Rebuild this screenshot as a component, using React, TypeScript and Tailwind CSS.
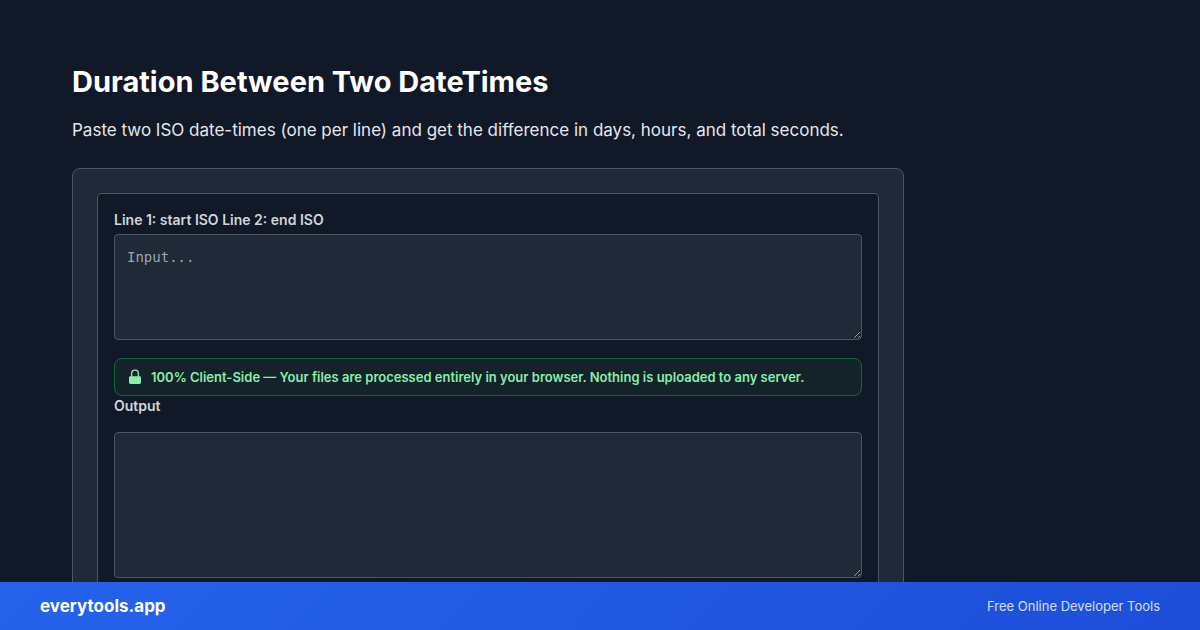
import React from "react";

function LockIcon() {
  return (
    <svg
      viewBox="0 0 16 16"
      className="w-4 h-4 shrink-0"
      fill="currentColor"
      aria-hidden="true"
    >
      <rect x="2" y="7.2" width="12" height="7.8" rx="1.4" />
      <path
        d="M4.6 8V4.6a3.4 3.4 0 0 1 6.8 0V8"
        fill="none"
        stroke="currentColor"
        strokeWidth="1.3"
      />
    </svg>
  );
}

function Tool() {
  return (
    <div className="rounded border border-[#4b5563] bg-[#111827] p-4">
      <label
        htmlFor="input"
        className="block text-sm font-semibold text-[#d1d5db] mb-1"
      >
        Line 1: start ISO Line 2: end ISO
      </label>
      <textarea
        id="input"
        rows={4}
        placeholder="Input..."
        className="block w-full rounded border border-[#4b5563] bg-[#1f2937] p-3 font-['DejaVu_Sans_Mono',monospace] text-sm text-white placeholder:text-[#9ca3af]"
      />
      <div className="mt-[18px] flex items-center gap-2 rounded-lg border border-[#166534] bg-[#14232a] px-3 py-2 text-[13px] leading-5 font-semibold text-[#86efac]">
        <LockIcon />
        <span>
          100% Client-Side — Your files are processed entirely in your browser.
          Nothing is uploaded to any server.
        </span>
      </div>
      <label
        htmlFor="output"
        className="block text-sm font-semibold text-[#d1d5db] mb-4"
      >
        Output
      </label>
      <textarea
        id="output"
        rows={6}
        readOnly
        className="block w-full rounded border border-[#4b5563] bg-[#1f2937] p-3 font-['DejaVu_Sans_Mono',monospace] text-sm text-white"
      />
    </div>
  );
}

function Footer() {
  return (
    <footer className="flex h-12 shrink-0 items-center justify-between bg-linear-135 from-[#2563eb] to-[#1d4ed8] px-10">
      <a href="#" className="text-[17px] leading-7 font-bold text-white">
        everytools.app
      </a>
      <span className="text-[13px] leading-5 text-white/80">
        Free Online Developer Tools
      </span>
    </footer>
  );
}

function App() {
  return (
    <div className="flex h-screen flex-col overflow-hidden bg-[#111827] font-['Inter',sans-serif]">
      <main className="min-h-0 flex-1 overflow-hidden px-[72px] pt-16">
        <div className="max-w-[832px]">
          <h1 className="text-[29px] leading-9 font-bold text-white">
            Duration Between Two DateTimes
          </h1>
          <p className="mt-4 text-[17px] leading-7 text-[#e5e7eb]">
            Paste two ISO date-times (one per line) and get the difference in
            days, hours, and total seconds.
          </p>
          <div className="mt-6 rounded-lg border border-[#4b5563] bg-[#1f2937] p-6">
            <Tool />
          </div>
        </div>
      </main>
      <Footer />
    </div>
  );
}

export default App;
